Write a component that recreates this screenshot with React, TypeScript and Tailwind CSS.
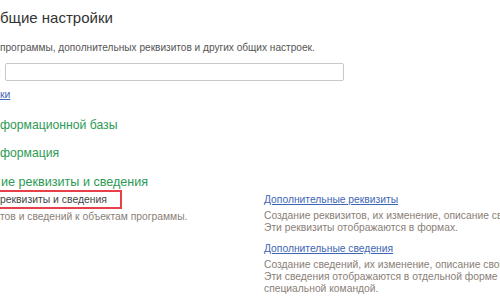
import React from "react";

export default function App() {
  return (
    <div className="w-[500px] h-[300px] overflow-hidden bg-white font-['Liberation_Sans',Arial,sans-serif]">
      <div className="pt-[9px] text-[15px] leading-[17px] text-[#333]">бщие настройки</div>
      <div className="mt-[16px] text-[10.1px] leading-[12px] text-[#555]">
        программы, дополнительных реквизитов и других общих настроек.
      </div>
      <div className="mt-[9px] flex items-center">
        <span className="-ml-[2px] w-[7px] text-[10px] text-[#555]">:</span>
        <div className="h-[18px] w-[339px] rounded-[2px] border border-[#c8c8c8] bg-white" />
      </div>
      <div className="mt-[8px] text-[10.3px] leading-[12px]">
        <span className="text-[#3e66b5] underline">ки</span>
      </div>
      <div className="mt-[17px] text-[12.2px] leading-[14px] text-[#2c9a55]">формационной базы</div>
      <div className="mt-[14px] text-[12.2px] leading-[14px] text-[#2c9a55]">формация</div>
      <div className="mt-[15px] ml-[1px] text-[12.6px] leading-[14px] text-[#2c9a55]">ие реквизиты и сведения</div>
      <div className="flex">
        <div className="w-[264px] shrink-0">
          <div className="mt-[1px] flex h-[19px] w-[122px] items-center border-2 border-l-0 border-[#e8404a] text-[10.4px] text-[#444]">
            реквизиты и сведения
          </div>
          <div className="mt-[2px] text-[10.3px] leading-[12px] text-[#8a8078]">
            тов и сведений к объектам программы.
          </div>
        </div>
        <div className="flex-1 whitespace-nowrap text-[10.3px] leading-[12px]">
          <div className="mt-[5px] text-[#3e66b5] underline">Дополнительные реквизиты</div>
          <div className="mt-[4px] text-[#8a8078]">Создание реквизитов, их изменение, описание свойств</div>
          <div className="text-[#8a8078]">Эти реквизиты отображаются в формах.</div>
          <div className="mt-[9px] text-[#3e66b5] underline">Дополнительные сведения</div>
          <div className="mt-[4px] text-[#8a8078]">Создание сведений, их изменение, описание свойств</div>
          <div className="text-[#8a8078]">Эти сведения отображаются в отдельной форме</div>
          <div className="text-[#8a8078]">специальной командой.</div>
        </div>
      </div>
    </div>
  );
}
